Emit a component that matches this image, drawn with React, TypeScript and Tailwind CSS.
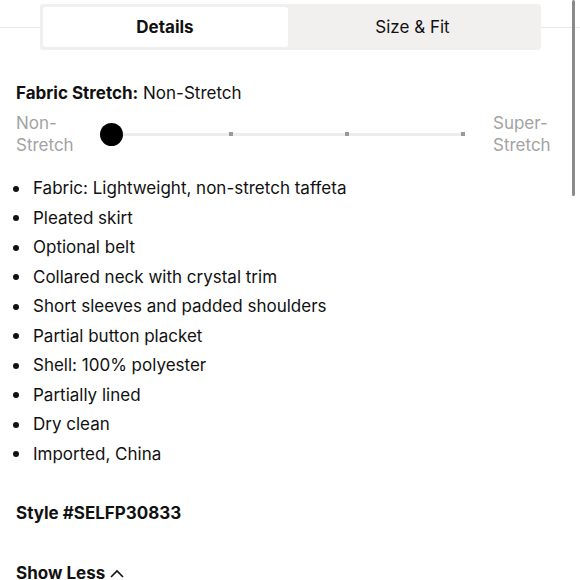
import React from "react";

const items = [
  "Fabric: Lightweight, non-stretch taffeta",
  "Pleated skirt",
  "Optional belt",
  "Collared neck with crystal trim",
  "Short sleeves and padded shoulders",
  "Partial button placket",
  "Shell: 100% polyester",
  "Partially lined",
  "Dry clean",
  "Imported, China",
];

export default function App() {
  return (
    <div
      className="relative w-[580px] h-[580px] overflow-hidden bg-white text-[#111]"
      style={{ fontFamily: 'Inter, "Liberation Sans", Arial, sans-serif' }}
    >
      {/* Tabs row */}
      <div className="flex items-center pt-[4px]">
        <div className="h-px flex-1 bg-[#ebe6e2]" />
        <div className="flex w-[501px] h-[46px] p-[3px] bg-[#f1f0ef] rounded-[3px]">
          <div className="flex w-[245px] items-center justify-center pt-[2px] rounded-[3px] bg-white text-[17px] font-bold">
            Details
          </div>
          <div className="flex flex-1 items-center justify-center pt-[2px] text-[17px]">
            Size &amp; Fit
          </div>
        </div>
        <div className="h-px flex-1 bg-[#ebe6e2]" />
      </div>

      <div className="px-[16px]">
        <div className="mt-[32px] text-[17px] leading-[22px]">
          <span className="font-bold">Fabric Stretch:</span> Non-Stretch
        </div>

        {/* Slider */}
        <div className="mt-[8px] flex items-center">
          <div className="w-[80px] text-[17px] leading-[22px] text-[#a3a3a3]">
            Non-
            <br />
            Stretch
          </div>
          <div className="relative ml-[4px] flex h-[23px] w-[369px] items-center">
            <div className="absolute left-[11px] right-[4px] h-[3px] bg-[#ececec]" />
            <div className="absolute left-0 h-[23px] w-[23px] rounded-full bg-black" />
            <div className="absolute left-[129px] h-[4px] w-[4px] bg-[#9a9a9a]" />
            <div className="absolute left-[245px] h-[4px] w-[4px] bg-[#9a9a9a]" />
            <div className="absolute left-[361px] h-[4px] w-[4px] bg-[#9a9a9a]" />
          </div>
          <div className="ml-[24px] text-[17px] leading-[22px] text-[#a3a3a3]">
            Super-
            <br />
            Stretch
          </div>
        </div>

        {/* Bullets */}
        <ul className="mt-[18px]">
          {items.map((t) => (
            <li key={t} className="flex items-center h-[29.5px] text-[17px]">
              <span className="ml-[-3px] mr-[14px] h-[6px] w-[6px] rounded-full bg-[#111]" />
              {t}
            </li>
          ))}
        </ul>

        <div className="mt-[33px] text-[17px] font-bold leading-[22px]">Style #SELFP30833</div>

        <div className="mt-[38px] flex items-center text-[17px] font-bold leading-[22px]">
          Show Less
          <svg className="ml-[5px]" width="14" height="9" viewBox="0 0 14 9" fill="none">
            <path d="M1 8 L7 2 L13 8" stroke="#111" strokeWidth="1.6" />
          </svg>
        </div>
      </div>

      {/* scroll indicator */}
      <div className="absolute right-[5px] top-0 h-[196px] w-[3px] rounded-full bg-[#8a8a8a]" />
    </div>
  );
}
